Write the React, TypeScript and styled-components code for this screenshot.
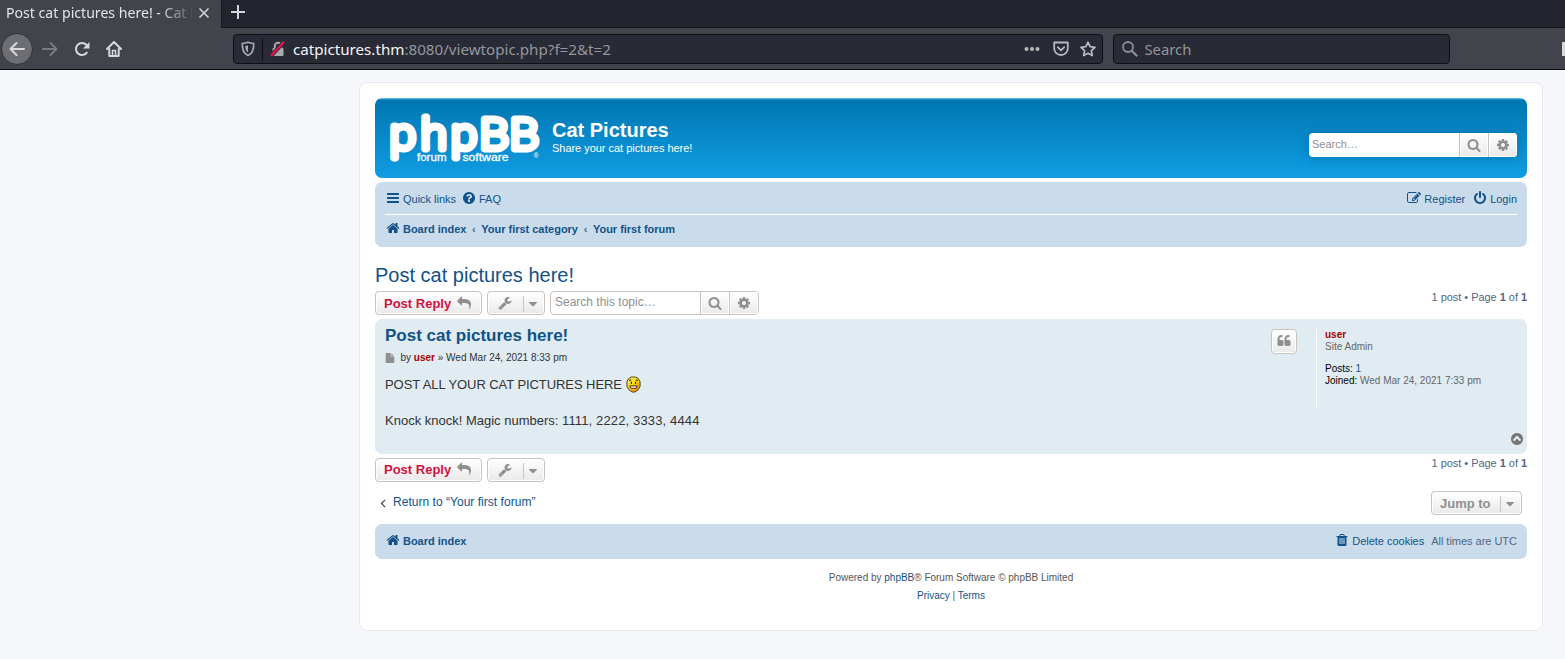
import React from "react";
import styled, { createGlobalStyle, css } from "styled-components";

const sans = '"Liberation Sans", Arial, Helvetica, sans-serif';
const ui = '"Noto Sans", sans-serif';
const link = "#105289";
const grey = "#8f8f8f";

const glyphs = {
  home: "M1472 992v480q0 26-19 45t-45 19h-384v-384h-256v384h-384q-26 0-45-19t-19-45v-480q0-1 .5-3t.5-3l575-474 575 474q1 2 1 6zm223-69l-62 74q-8 9-21 11h-3q-13 0-21-7l-692-577-692 577q-12 8-24 7-13-2-21-11l-62-74q-8-10-7-23.5t11-21.5l719-599q32-26 76-26t76 26l244 204v-195q0-14 9-23t23-9h192q14 0 23 9t9 23v408l219 182q10 8 11 21.5t-7 23.5z",
  bars: "M1664 1344v128q0 26-19 45t-45 19h-1408q-26 0-45-19t-19-45v-128q0-26 19-45t45-19h1408q26 0 45 19t19 45zm0-512v128q0 26-19 45t-45 19h-1408q-26 0-45-19t-19-45v-128q0-26 19-45t45-19h1408q26 0 45 19t19 45zm0-512v128q0 26-19 45t-45 19h-1408q-26 0-45-19t-19-45v-128q0-26 19-45t45-19h1408q26 0 45 19t19 45z",
  question: "M1024 1376v-192q0-14-9-23t-23-9h-192q-14 0-23 9t-9 23v192q0 14 9 23t23 9h192q14 0 23-9t9-23zm256-672q0-88-55.5-163t-138.5-116-170-41q-243 0-371 213-15 24 8 42l132 100q7 6 19 6 16 0 25-12 53-68 86-92 34-24 86-24 48 0 85.5 26t37.5 59q0 38-20 61t-68 45q-63 28-115.5 86.5t-52.5 125.5v36q0 14 9 23t23 9h192q14 0 23-9t9-23q0-19 21.5-49.5t54.5-49.5q32-18 49-28.5t46-35 44.5-48 28-60.5 12.5-81zm384 192q0 209-103 385.5t-279.5 279.5-385.5 103-385.5-103-279.5-279.5-103-385.5 103-385.5 279.5-279.5 385.5-103 385.5 103 279.5 279.5 103 385.5z",
  search: "M1216 832q0-185-131.5-316.5t-316.5-131.5-316.5 131.5-131.5 316.5 131.5 316.5 316.5 131.5 316.5-131.5 131.5-316.5zm512 832q0 52-38 90t-90 38q-54 0-90-38l-343-342q-179 124-399 124-143 0-273.5-55.5t-225-150-150-225-55.5-273.5 55.5-273.5 150-225 225-150 273.5-55.5 273.5 55.5 225 150 150 225 55.5 273.5q0 220-124 399l343 343q37 37 37 90z",
  cog: "M1152 896q0-106-75-181t-181-75-181 75-75 181 75 181 181 75 181-75 75-181zm512-109v222q0 12-8 23t-20 13l-185 28q-19 54-39 91 35 50 107 138 10 12 10 25t-9 23q-27 37-99 108t-94 71q-12 0-26-9l-138-108q-44 23-91 38-16 136-29 186-7 28-36 28h-222q-14 0-24.5-8.5t-11.5-21.5l-28-184q-49-16-90-37l-141 107q-10 9-25 9-14 0-25-11-126-114-165-168-7-10-7-23 0-12 8-23 15-21 51-66.5t54-70.5q-27-50-41-99l-183-27q-13-2-21-12.5t-8-23.5v-222q0-12 8-23t19-13l186-28q14-46 39-92-40-57-107-138-10-12-10-24 0-10 9-23 26-36 98.5-107.5t94.5-71.5q13 0 26 10l138 107q44-23 91-38 16-136 29-186 7-28 36-28h222q14 0 24.5 8.5t11.5 21.5l28 184q49 16 90 37l142-107q9-9 24-9 13 0 25 10 129 119 165 170 7 8 7 22 0 12-8 23-15 21-51 66.5t-54 70.5q26 50 41 98l183 28q13 2 21 12.5t8 23.5z",
  power: "M1664 896q0 156-61 298t-164 245-245 164-298 61-298-61-245-164-164-245-61-298q0-182 80.5-343t226.5-270q43-32 95.5-25t83.5 50q32 42 24.5 94.5t-49.5 84.5q-98 74-151.5 181t-53.5 228q0 104 40.5 198.5t109.5 163.5 163.5 109.5 198.5 40.5 198.5-40.5 163.5-109.5 109.5-163.5 40.5-198.5q0-121-53.5-228t-151.5-181q-42-32-49.5-84.5t24.5-94.5q31-43 84-50t95 25q146 109 226.5 270t80.5 343zm-640-768v640q0 52-38 90t-90 38-90-38-38-90v-640q0-52 38-90t90-38 90 38 38 90z",
  edit: "M888 1184l116-116-152-152-116 116v56h96v96h56zm440-720q-16-16-33 1l-350 350q-17 17-1 33t33-1l350-350q17-17 1-33zm80 594v190q0 119-84.5 203.5t-203.5 84.5h-832q-119 0-203.5-84.5t-84.5-203.5v-832q0-119 84.5-203.5t203.5-84.5h832q63 0 117 25 15 7 18 23 3 17-9 29l-49 49q-14 14-32 8-23-6-45-6h-832q-66 0-113 47t-47 113v832q0 66 47 113t113 47h832q66 0 113-47t47-113v-126q0-13 9-22l64-64q15-15 35-7t20 29zm-96-738l288 288-672 672h-288v-288zm444 132l-92 92-288-288 92-92q28-28 68-28t68 28l152 152q28 28 28 68t-28 68z",
  reply: "M1792 1120q0 166-127 451-3 7-10.5 24t-13.5 30-13 22q-12 17-28 17-15 0-23.5-10t-8.5-25q0-9 2.5-26.5t2.5-23.5q5-68 5-123 0-101-17.5-181t-48.5-138.5-80-101-105.5-69.5-133-42.5-154-21.5-175.5-6h-224v256q0 26-19 45t-45 19-45-19l-512-512q-19-19-19-45t19-45l512-512q19-19 45-19t45 19 19 45v256h224q713 0 875 403 53 134 53 333z",
  wrench: "M448 1472q0-26-19-45t-45-19-45 19-19 45 19 45 45 19 45-19 19-45zm644-420l-682 682q-37 37-90 37-52 0-91-37l-106-108q-38-36-38-90 0-53 38-91l681-681q39 98 114.5 173.5t173.5 114.5zm634-435q0 39-23 106-47 134-164.5 217.5t-258.5 83.5q-185 0-316.5-131.5t-131.5-316.5 131.5-316.5 316.5-131.5q58 0 121.5 16.5t107.5 46.5q16 11 16 28t-16 28l-293 169v224l193 107q5-3 79-48.5t135.5-81 70.5-35.5q15 0 23.5 10t8.5 25z",
  caret: "M1408 704q0 26-19 45l-448 448q-19 19-45 19t-45-19l-448-448q-19-19-19-45t19-45 45-19h896q26 0 45 19t19 45z",
  file: "M1152 512v-472q22 14 36 28l408 408q14 14 28 36h-472zm-128 32q0 40 28 68t68 28h544v1056q0 40-28 68t-68 28h-1344q-40 0-68-28t-28-68v-1600q0-40 28-68t68-28h800v544z",
  quote: "M832 960v384q0 80-56 136t-136 56h-384q-80 0-136-56t-56-136v-704q0-104 40.5-198.5t109.5-163.5 163.5-109.5 198.5-40.5h64q26 0 45 19t19 45v128q0 26-19 45t-45 19h-64q-106 0-181 75t-75 181v32q0 40 28 68t68 28h224q80 0 136 56t56 136zm896 0v384q0 80-56 136t-136 56h-384q-80 0-136-56t-56-136v-704q0-104 40.5-198.5t109.5-163.5 163.5-109.5 198.5-40.5h64q26 0 45 19t19 45v128q0 26-19 45t-45 19h-64q-106 0-181 75t-75 181v32q0 40 28 68t68 28h224q80 0 136 56t56 136z",
  up: "M1293 1139l102-102q19-19 19-45t-19-45l-454-454q-19-19-45-19t-45 19l-454 454q-19 19-19 45t19 45l102 102q19 19 45 19t45-19l307-307 307 307q19 19 45 19t45-19zm371-243q0 209-103 385.5t-279.5 279.5-385.5 103-385.5-103-279.5-279.5-103-385.5 103-385.5 279.5-279.5 385.5-103 385.5 103 279.5 279.5 103 385.5z",
  trash: "M704 1376v-704q0-14-9-23t-23-9h-64q-14 0-23 9t-9 23v704q0 14 9 23t23 9h64q14 0 23-9t9-23zm256 0v-704q0-14-9-23t-23-9h-64q-14 0-23 9t-9 23v704q0 14 9 23t23 9h64q14 0 23-9t9-23zm256 0v-704q0-14-9-23t-23-9h-64q-14 0-23 9t-9 23v704q0 14 9 23t23 9h64q14 0 23-9t9-23zm-544-992h448l-48-117q-7-9-17-11h-317q-10 2-17 11zm928 32v64q0 14-9 23t-23 9h-96v948q0 83-47 143.5t-113 60.5h-832q-66 0-113-58.5t-47-141.5v-952h-96q-14 0-23-9t-9-23v-64q0-14 9-23t23-9h309l70-167q15-37 54-63t79-26h320q40 0 79 26t54 63l70 167h309q14 0 23 9t9 23z",
  angle: "M1203 544q0 13-10 23l-393 393 393 393q10 10 10 23t-10 23l-50 50q-10 10-23 10t-23-10l-466-466q-10-10-10-23t10-23l466-466q10-10 23-10t23 10l50 50q10 10 10 23z",
};

const Glyph = styled.svg<{ $size: number }>`
  width: ${(p) => p.$size}px;
  height: ${(p) => p.$size}px;
  flex: none;
  fill: currentColor;
  display: block;
`;

const Icon = ({ name, size = 14, className }: { name: keyof typeof glyphs; size?: number; className?: string }) => (
  <Glyph className={className} $size={size} viewBox="0 0 1792 1792">
    <path d={glyphs[name]} />
  </Glyph>
);

const Global = createGlobalStyle`
  * { box-sizing: border-box; }
  html, body { margin: 0; height: 100%; }
  body { background: #f5f7fa; font-family: ${sans}; overflow: hidden; }
`;

/* ---------- browser window ---------- */

const TabStrip = styled.div`
  display: flex;
  height: 28px;
  background: #23252e;
  color: #d3d4d8;
  font: 14.1px/26px ${ui};
`;

const Tab = styled.div`
  display: flex;
  align-items: center;
  width: 221px;
  height: 28px;
  padding-left: 6px;
  background: #42444b;
`;

const TabTitle = styled.div`
  width: 186px;
  height: 26px;
  margin-bottom: 2px;
  overflow: hidden;
  white-space: nowrap;
  color: #e4e4e6;
  mask-image: linear-gradient(to right, #000 152px, transparent 190px);
`;

const Drawing = styled.svg<{ $w: number; $h: number; $c?: string }>`
  width: ${(p) => p.$w}px;
  height: ${(p) => p.$h}px;
  flex: none;
  display: block;
  fill: none;
  color: ${(p) => p.$c ?? "inherit"};
  stroke: currentColor;
`;

const TabClose = styled.div`
  margin: -2px 0 0 6px;
`;

const TabRest = styled.div`
  flex: 1;
  border-left: 1px solid #16171d;
  border-bottom: 1px solid #16171d;
  padding: 5px 0 0 9px;
`;

const Toolbar = styled.div`
  display: flex;
  align-items: center;
  height: 42px;
  background: #42444b;
  border-bottom: 1px solid #0c0c0e;
  color: #d8d8da;
`;

const BackButton = styled.div`
  width: 32px;
  height: 32px;
  margin-left: 1px;
  border-radius: 50%;
  border: 1px solid #313238;
  background: #6d6e74;
  display: flex;
  align-items: center;
  justify-content: center;
`;

const NavIcon = styled.div<{ $left: number; $dim?: boolean }>`
  margin-left: ${(p) => p.$left}px;
  color: ${(p) => (p.$dim ? "#7b7c81" : "#d8d8da")};
`;

const Field = styled.div<{ $w: number; $left: number; $font: number }>`
  display: flex;
  align-items: center;
  width: ${(p) => p.$w}px;
  height: 30px;
  margin-left: ${(p) => p.$left}px;
  border: 1px solid #0f1014;
  border-radius: 4px;
  background: #282a36;
  color: #95969b;
  font: ${(p) => p.$font}px/28px ${ui};
`;

const FieldSplit = styled.div`
  width: 1px;
  height: 22px;
  margin: 0 7px 0 7px;
  background: #0f1014;
`;

const Url = styled.div`
  flex: 1;
  margin-left: 7px;
  white-space: nowrap;
  b { font-weight: 400; color: #f4f4f6; }
`;

const FieldIcons = styled.div`
  display: flex;
  align-items: center;
  gap: 11.500px;
  padding-right: 6px;
`;

const SearchLabel = styled.span`
  margin-left: 6.500px;
`;

const EdgeMark = styled.div`
  width: 3px;
  height: 14px;
  margin-left: auto;
  background: #d8d8da;
`;

/* ---------- forum page ---------- */

const Wrap = styled.main`
  width: 1184px;
  height: 549px;
  margin: 12px 0 0 359px;
  padding: 15px;
  border: 1px solid #e6e9ed;
  border-radius: 8px;
  background: #fff;
  color: #536482;
`;

const Header = styled.header`
  display: flex;
  align-items: center;
  height: 80px;
  padding: 0 10px 0 14px;
  border-radius: 7px;
  color: #fff;
  background: linear-gradient(to bottom, #6aceff 0, #0076b1 2px, #12a3eb 92px);
`;

const Logo = styled.svg`
  width: 153px;
  height: 56px;
  flex: none;
  overflow: visible;
  fill: #fff;
  stroke: #fff;
  font-family: ${sans};
`;

const Wordmark = styled.text`
  font-family: Roboto, sans-serif;
  font-size: 42.500px;
  font-weight: 100;
  stroke-width: 6.8px;
  stroke-linejoin: round;
`;

const Tagline = styled.text`
  font-size: 11px;
  stroke-width: 0.3px;
`;

const SiteText = styled.div`
  flex: 1;
  margin: 0 0 0 10px;
  height: 40px;
`;

const SiteName = styled.h1`
  margin: 0;
  font: bold 20px/24px ${sans};
`;

const SiteDescription = styled.p`
  margin: 0;
  font: 11px/12px ${sans};
  letter-spacing: -0.03px;
`;

const SearchBox = styled.div<{ $outlined?: boolean }>`
  display: flex;
  height: 24px;
  border-radius: 4px;
  overflow: hidden;
  background: #fff;
  ${(p) =>
    p.$outlined
      ? css`
          border: 1px solid #c7c3bf;
          width: 209px;
        `
      : css`
          width: 208px;
          margin-top: 14px;
          box-shadow: 0 0 10px #0075b0;
        `}
`;

const Placeholder = styled.div<{ $size: number; $pad: number; $line: number }>`
  flex: 1;
  padding-left: ${(p) => p.$pad}px;
  color: #8f8f8f;
  font: ${(p) => p.$size}px/${(p) => p.$line}px ${sans};
`;

const SearchButton = styled.div<{ $w: number }>`
  display: flex;
  align-items: center;
  justify-content: center;
  width: ${(p) => p.$w}px;
  border-left: 1px solid #c7c3bf;
  background: linear-gradient(to bottom, #fff, #e9e9e9);
  box-shadow: inset 0 0 0 1px #fff;
  color: ${grey};
`;

const NavBar = styled.nav`
  height: 65px;
  margin-top: 4px;
  padding: 0 10px;
  border-radius: 7px;
  background: #cadceb;
`;

const NavRow = styled.div<{ $line?: boolean; $h?: number }>`
  display: flex;
  align-items: center;
  height: ${(p) => p.$h ?? 29}px;
  padding: 1px 0 0 1px;
  border-bottom: ${(p) => (p.$line ? "1px solid #fff" : "0")};
  font: 11px/14px ${sans};
  letter-spacing: -0.02px;
`;

const Item = styled.a<{ $bold?: boolean; $gap?: number }>`
  display: flex;
  align-items: center;
  color: ${link};
  font-weight: ${(p) => (p.$bold ? 700 : 400)};
  margin-right: ${(p) => p.$gap ?? 0}px;
  white-space: nowrap;
  svg { margin: -2px 3px 0 0; }
`;

const Push = styled.div`
  flex: 1;
`;

const Crumb = styled.span`
  width: 15px;
  text-align: center;
  font-weight: 700;
`;

const TopicTitle = styled.h2`
  margin: 0;
  height: 44px;
  padding-top: 16px;
  color: ${link};
  font: 20px/24px ${sans};
`;

const ActionBar = styled.div`
  display: flex;
  height: 24px;
  gap: 5px;
`;

const Button = styled.div<{ $w: number; $h?: number; $color?: string; $drop?: number }>`
  display: flex;
  align-items: center;
  width: ${(p) => p.$w}px;
  height: ${(p) => p.$h ?? 24}px;
  padding: ${(p) => p.$drop ?? 0}px 8px 0;
  border: 1px solid #c7c3bf;
  border-radius: 4px;
  background: linear-gradient(to bottom, #fff, #e9e9e9);
  box-shadow: inset 0 0 0 1px #fff;
  color: ${(p) => p.$color ?? grey};
  font: bold 13px/20px ${sans};
  white-space: nowrap;
`;

const ReplyIcon = styled(Icon)`
  margin: -2px 0 0 6px;
  color: ${grey};
`;

const ToolIcon = styled(Icon)`
  margin: -2px 0 0 2px;
`;

const CaretPart = styled.div`
  display: flex;
  align-items: center;
  height: 16px;
  margin-left: auto;
  padding-left: 2px;
  margin-right: -4px;
  border-left: 1px solid #c7c3bf;
`;

const Pages = styled.div<{ $lift?: number }>`
  margin: ${(p) => -(p.$lift ?? 0)}px 0 0 auto;
  font: 11px/13px ${sans};
  letter-spacing: -0.04px;
`;

const Post = styled.article`
  display: flex;
  height: 135px;
  margin: 4px 0;
  padding: 10px 4px 8px 10px;
  border-radius: 7px;
  background: #e1ebf2;
`;

const PostBody = styled.div`
  flex: 1;
  margin-top: -3px;
`;

const PostTitle = styled.h3`
  margin: 0;
  color: ${link};
  font: bold 17px/20px ${sans};
`;

const Author = styled.p`
  display: flex;
  align-items: center;
  margin: 5px 0 0;
  color: #333;
  font: 10px/14px ${sans};
  white-space: pre;
  svg { margin-right: 5.500px; color: ${grey}; }
`;

const Content = styled.div`
  margin-top: 11px;
  color: #333;
  font: 13px/18px ${sans};
  svg { margin: -2px 0 0 4px; }
`;

const Line = styled.div<{ $track?: number }>`
  display: flex;
  align-items: center;
  height: 18px;
  white-space: pre;
  letter-spacing: ${(p) => p.$track ?? 0}px;
`;

const Numbers = styled.span`
  letter-spacing: 0.14px;
`;

const UserName = styled.b`
  color: #aa0000;
`;

const QuoteButton = styled(Button)`
  padding: 0;
  justify-content: center;
  margin-right: 19px;
`;

const QuoteIcon = styled(Icon)`
  margin-top: -1px;
`;

const Side = styled.aside`
  display: flex;
  flex-direction: column;
  width: 207px;
`;

const Profile = styled.div`
  height: 80px;
  padding-left: 8px;
  border-left: 1px solid #fff;
  color: #666;
  font: 10px/12px ${sans};
  p { margin: 0 0 10px; }
  strong { font-weight: 400; color: #000; }
  a { color: ${link}; }
`;

const BackToTop = styled(Icon)`
  margin: auto -1px 0 auto;
  color: #757575;
`;

const JumpRow = styled.div`
  display: flex;
  height: 24px;
  margin-top: 9px;
  padding: 0 5px 0 0;
  justify-content: space-between;
`;

const ReturnLink = styled.a`
  display: flex;
  align-items: center;
  height: 22px;
  padding-left: 1px;
  color: ${link};
  font: 12px/22px ${sans};
  letter-spacing: 0.03px;
  svg { margin: 1px 3px 0 0; color: #333; }
`;

const FooterBar = styled.div`
  height: 35px;
  margin-top: 9px;
  padding: 2px 10px 0;
  border-radius: 7px;
  background: #cadceb;
`;

const Copyright = styled.footer`
  margin-top: 10px;
  text-align: center;
  color: #555;
  font: 10px/18px ${sans};
  letter-spacing: -0.01px;
  a { color: ${link}; }
`;

const PostReply = ({ drop = 0 }: { drop?: number }) => (
  <Button $w={107} $drop={drop} $color="#d31141">
    Post Reply
    <ReplyIcon name="reply" />
  </Button>
);

const Tools = () => (
  <Button $w={58} $drop={1}>
    <ToolIcon name="wrench" />
    <CaretPart>
      <Icon name="caret" />
    </CaretPart>
  </Button>
);

const PageCount = ({ lift = 0 }: { lift?: number }) => (
  <Pages $lift={lift}>
    1 post • Page <b>1</b> of <b>1</b>
  </Pages>
);

const Smiley = () => (
  <svg width="15" height="17" viewBox="0 0 16 18">
    <defs>
      <linearGradient id="face" x1="0" y1="0" x2="0.7" y2="1">
        <stop offset="0" stopColor="#fff36a" />
        <stop offset="0.5" stopColor="#ffd91c" />
        <stop offset="1" stopColor="#f08c00" />
      </linearGradient>
    </defs>
    <path d="M5.500 1h4.500l3 1.500 2 3.500v5l-2 3.500-3.500 2.500h-3L3 14.500 1 11V6l1.500-3z" fill="url(#face)" stroke="#4a3a10" />
    <path d="M3.500 5l2-1M10.500 4l2 1M5.800 6v2.500M10.200 6v2.500" stroke="#3a2a05" strokeWidth="1.200" fill="none" />
    <path d="M4 10.500h8l-1.200 2.500H5.200z" fill="#fff" stroke="#3a2a05" />
  </svg>
);

export default function App() {
  return (
    <>
      <Global />
      <TabStrip>
        <Tab>
          <TabTitle>Post cat pictures here! - Cat P</TabTitle>
          <TabClose>
            <Drawing $w={12} $h={12} viewBox="0 0 12 12" strokeWidth="1.6">
              <path d="M1.500 1.500l9 9M10.500 1.500l-9 9" />
            </Drawing>
          </TabClose>
        </Tab>
        <TabRest>
          <Drawing $w={14} $h={14} viewBox="0 0 14 14" strokeWidth="2">
            <path d="M7 0v14M0 7h14" />
          </Drawing>
        </TabRest>
      </TabStrip>
      <Toolbar>
        <BackButton>
          <Drawing $w={16} $h={16} viewBox="0 0 16 16" strokeWidth="2" strokeLinecap="round" strokeLinejoin="round">
            <path d="M15 8H1.500M7.500 2L1.500 8l6 6" />
          </Drawing>
        </BackButton>
        <NavIcon $left={9} $dim>
          <Drawing $w={16} $h={16} viewBox="0 0 16 16" strokeWidth="2" strokeLinecap="round" strokeLinejoin="round">
            <path d="M1 8h13.500M8.500 2l6 6-6 6" />
          </Drawing>
        </NavIcon>
        <NavIcon $left={16}>
          <Drawing $w={16} $h={16} viewBox="0 0 16 16" strokeWidth="2">
            <path d="M13.200 11A6 6 0 1 1 12.500 4L14 6" />
            <path d="M15.500 1v6.500H9z" fill="currentColor" stroke="none" />
          </Drawing>
        </NavIcon>
        <NavIcon $left={16}>
          <Drawing $w={16} $h={16} viewBox="0 0 16 16" strokeWidth="2" strokeLinejoin="round" strokeLinecap="round">
            <path d="M1 8l7-7 7 7M3.300 8v7h9.400V8" />
            <path d="M6.500 15V9.500h3V15" strokeWidth="1.500" />
          </Drawing>
        </NavIcon>
        <Field $w={870} $left={111} $font={15.17}>
          <NavIcon $left={7}>
            <Drawing $w={14} $h={16} viewBox="0 0 14 16" strokeWidth="1.700" $c="#a9aaae">
              <path d="M7 1.300c2 .9 4 1.100 5.700 1.200C12.900 8.500 11.500 12.500 7 14.600 2.500 12.500 1.100 8.500 1.300 2.500 3 2.400 5 2.200 7 1.300z" />
              <path d="M7 4.500v7C5 10 4.300 8 4.300 5z" fill="currentColor" stroke="none" />
            </Drawing>
          </NavIcon>
          <FieldSplit />
          <Drawing $w={16} $h={16} viewBox="0 0 16 16" strokeWidth="2" $c="#a9aaae">
            <path d="M4.800 7V5a3.200 3.200 0 0 1 6.400 0v2" />
            <rect x="2.500" y="7" width="11" height="8" rx="1" fill="currentColor" stroke="none" />
            <path d="M1 14.800L14 .8" stroke="#282a36" strokeWidth="4" />
            <path d="M1 14.800L14 .8" stroke="#f50f4b" strokeWidth="2" />
          </Drawing>
          <Url>
            <b>catpictures.thm</b>:8080/viewtopic.php?f=2&amp;t=2
          </Url>
          <FieldIcons>
            <Drawing $w={18} $h={16} viewBox="0 0 18 16" $c="#b9babd">
              <g fill="currentColor" stroke="none">
                <circle cx="3.500" cy="8" r="2" />
                <circle cx="9" cy="8" r="2" />
                <circle cx="14.500" cy="8" r="2" />
              </g>
            </Drawing>
            <Drawing $w={16} $h={16} viewBox="0 0 16 16" strokeWidth="1.800" $c="#b9babd" strokeLinecap="round" strokeLinejoin="round">
              <path d="M1.200 1.500h13.600v6a6.800 6.500 0 0 1-13.600 0z" />
              <path d="M4.800 6.200L8 9.300l3.200-3.100" />
            </Drawing>
            <Drawing $w={16} $h={16} viewBox="0 0 16 16" strokeWidth="1.700" $c="#b9babd" strokeLinejoin="round">
              <path d="M8 1.200l2.100 4.500 4.900.6-3.600 3.400.9 4.900L8 12.200l-4.300 2.400.9-4.900L1 6.300l4.900-.6z" />
            </Drawing>
          </FieldIcons>
        </Field>
        <Field $w={337} $left={10} $font={14.8}>
          <NavIcon $left={8}>
            <Drawing $w={16} $h={16} viewBox="0 0 16 16" strokeWidth="1.800" $c="#8d8e93">
              <circle cx="6" cy="6" r="5" />
              <path d="M9.600 9.600l5.600 5.600" strokeWidth="2.200" />
            </Drawing>
          </NavIcon>
          <SearchLabel>Search</SearchLabel>
        </Field>
        <EdgeMark />
      </Toolbar>

      <Wrap>
        <Header>
          <Logo viewBox="0 0 153 56">
            <g transform="scale(1.1 1)">
              <Wordmark x="1 29.200 56.500 82.700 110" y="39.500">phpBB</Wordmark>
            </g>
            <Tagline x="28" y="50.500" textLength="29.500" lengthAdjust="spacingAndGlyphs">forum</Tagline>
            <Tagline x="73.500" y="50.500" textLength="46" lengthAdjust="spacingAndGlyphs">software</Tagline>
            <text x="144.500" y="48" fontSize="7" stroke="none">®</text>
          </Logo>
          <SiteText>
            <SiteName>Cat Pictures</SiteName>
            <SiteDescription>Share your cat pictures here!</SiteDescription>
          </SiteText>
          <SearchBox>
            <Placeholder $size={11} $pad={3} $line={22}>Search…</Placeholder>
            <SearchButton $w={29}><Icon name="search" /></SearchButton>
            <SearchButton $w={29}><Icon name="cog" /></SearchButton>
          </SearchBox>
        </Header>

        <NavBar>
          <NavRow $line $h={33}>
            <Item $gap={6}><Icon name="bars" />Quick links</Item>
            <Item><Icon name="question" />FAQ</Item>
            <Push />
            <Item $gap={8}><Icon name="edit" />Register</Item>
            <Item><Icon name="power" />Login</Item>
          </NavRow>
          <NavRow $h={27}>
            <Item $bold><Icon name="home" />Board index</Item>
            <Crumb>‹</Crumb>
            <Item $bold>Your first category</Item>
            <Crumb>‹</Crumb>
            <Item $bold>Your first forum</Item>
          </NavRow>
        </NavBar>

        <TopicTitle>Post cat pictures here!</TopicTitle>
        <ActionBar>
          <PostReply drop={2} />
          <Tools />
          <SearchBox $outlined>
            <Placeholder $size={12} $pad={4} $line={20}>Search this topic…</Placeholder>
            <SearchButton $w={29}><Icon name="search" /></SearchButton>
            <SearchButton $w={29}><Icon name="cog" /></SearchButton>
          </SearchBox>
          <PageCount />
        </ActionBar>

        <Post>
          <PostBody>
            <PostTitle>Post cat pictures here!</PostTitle>
            <Author>
              <Icon name="file" size={10} />by <UserName>user</UserName> » Wed Mar 24, 2021 8:33 pm
            </Author>
            <Content>
              <Line $track={-0.07}>POST ALL YOUR CAT PICTURES HERE<Smiley /></Line>
              <Line />
              <Line>Knock knock! Magic numbers: <Numbers>1111, 2222, 3333, 4444</Numbers></Line>
            </Content>
          </PostBody>
          <QuoteButton $w={26} $h={25}><QuoteIcon name="quote" /></QuoteButton>
          <Side>
            <Profile>
              <p><UserName>user</UserName><br />Site Admin</p>
              <strong>Posts:</strong> <a>1</a><br />
              <strong>Joined:</strong> Wed Mar 24, 2021 7:33 pm
            </Profile>
            <BackToTop name="up" />
          </Side>
        </Post>

        <ActionBar>
          <PostReply />
          <Tools />
          <PageCount lift={1} />
        </ActionBar>

        <JumpRow>
          <ReturnLink><Icon name="angle" />Return to “Your first forum”</ReturnLink>
          <Button $w={91} $drop={1}>
            Jump to
            <CaretPart><Icon name="caret" /></CaretPart>
          </Button>
        </JumpRow>

        <FooterBar>
          <NavRow>
            <Item $bold><Icon name="home" />Board index</Item>
            <Push />
            <Item $gap={7}><Icon name="trash" />Delete cookies</Item>
            All times are UTC
          </NavRow>
        </FooterBar>

        <Copyright>
          Powered by <a>phpBB</a>® Forum Software © phpBB Limited<br />
          <a>Privacy</a> | <a>Terms</a>
        </Copyright>
      </Wrap>
    </>
  );
}
